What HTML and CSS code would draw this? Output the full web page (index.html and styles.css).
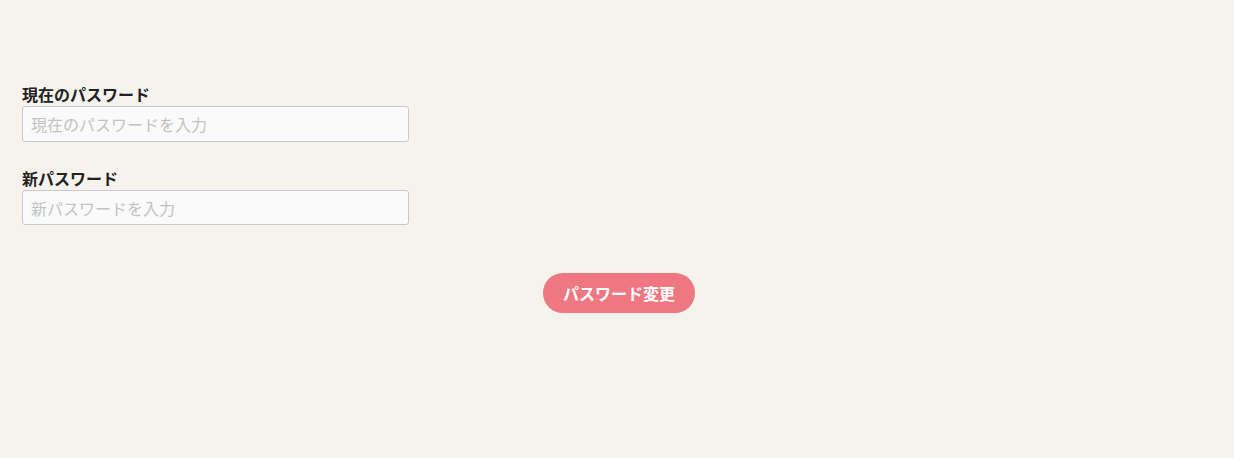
FILE: index.html
```html
<!DOCTYPE html>
<html lang="ja">
<head>
<meta charset="utf-8">
<link rel="stylesheet" href="styles.css">
</head>
<body>
<main class="page">
  <form class="form">
    <div class="field">
      <label class="label">現在のパスワード</label>
      <input class="input" type="password" placeholder="現在のパスワードを入力">
    </div>
    <div class="field">
      <label class="label">新パスワード</label>
      <input class="input" type="password" placeholder="新パスワードを入力">
    </div>
    <div class="actions">
      <button class="btn" type="button">パスワード変更</button>
    </div>
  </form>
</main>
</body>
</html>
```
FILE: styles.css
```css
html, body {
  margin: 0;
  padding: 0;
  background: #f6f3ee;
  font-family: "Noto Sans CJK JP", "Noto Sans", sans-serif;
}
.page {
  padding: 84px 22px 0 22px;
}
.form {
  display: flex;
  flex-direction: column;
}
.field {
  display: flex;
  flex-direction: column;
  gap: 2px;
  margin-bottom: 26px;
}
.label {
  font-size: 16px;
  line-height: 20px;
  font-weight: 700;
  color: #222;
}
.input {
  box-sizing: border-box;
  width: 387px;
  height: 36px;
  border: 1px solid #c9c9c9;
  border-radius: 3px;
  background: #fafafa;
  padding: 0 8px;
  font-family: inherit;
  font-size: 16px;
  color: #333;
}
.input::placeholder {
  color: #c3c3c3;
}
.field:nth-child(2) .input {
  height: 35px;
}
.actions {
  display: flex;
  justify-content: center;
  margin-top: 22px;
  padding-left: 4px;
}
.btn {
  width: 152px;
  height: 40px;
  border: none;
  border-radius: 20px;
  background: #ee7782;
  color: #fff;
  font-family: inherit;
  font-size: 16px;
  font-weight: 700;
}
```
